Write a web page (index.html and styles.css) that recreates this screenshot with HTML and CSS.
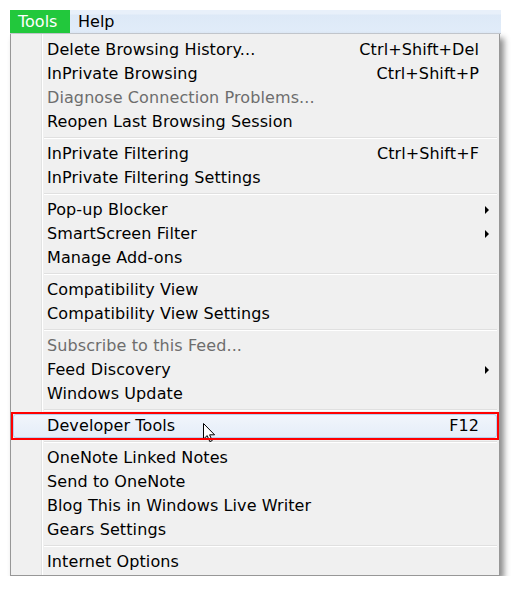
FILE: index.html
```html
<!DOCTYPE html>
<html lang="en">
<head>
    <meta charset="UTF-8">
    <title>Tools menu</title>
    <link rel="stylesheet" href="styles.css">
</head>
<body>
    <div class="window">
        <!-- Barra de menú -->
        <div class="menubar">
            <span class="menubar-item active">Tools</span>
            <span class="menubar-item">Help</span>
        </div>

        <!-- Menú desplegable -->
        <div class="dropdown">
            <div class="item"><span>Delete Browsing History...</span><span class="key">Ctrl+Shift+Del</span></div>
            <div class="item"><span>InPrivate Browsing</span><span class="key">Ctrl+Shift+P</span></div>
            <div class="item disabled"><span>Diagnose Connection Problems...</span></div>
            <div class="item"><span>Reopen Last Browsing Session</span></div>
            <div class="sep"></div>
            <div class="item"><span>InPrivate Filtering</span><span class="key">Ctrl+Shift+F</span></div>
            <div class="item"><span>InPrivate Filtering Settings</span></div>
            <div class="sep"></div>
            <div class="item sub"><span>Pop-up Blocker</span></div>
            <div class="item sub"><span>SmartScreen Filter</span></div>
            <div class="item"><span>Manage Add-ons</span></div>
            <div class="sep"></div>
            <div class="item"><span>Compatibility View</span></div>
            <div class="item"><span>Compatibility View Settings</span></div>
            <div class="sep"></div>
            <div class="item disabled"><span>Subscribe to this Feed...</span></div>
            <div class="item sub"><span>Feed Discovery</span></div>
            <div class="item"><span>Windows Update</span></div>
            <div class="sep"></div>
            <div class="item hover"><span>Developer Tools</span><span class="key">F12</span>
                <svg class="cursor" width="13" height="20" viewBox="0 0 13 20">
                    <path d="M0.5 0.5 L0.5 16 L4.2 12.6 L6.8 18.6 L9.2 17.6 L6.6 11.8 L11.6 11.8 Z" fill="#fff" stroke="#000" stroke-width="1" stroke-linejoin="miter"/>
                </svg>
            </div>
            <div class="sep"></div>
            <div class="item"><span>OneNote Linked Notes</span></div>
            <div class="item"><span>Send to OneNote</span></div>
            <div class="item"><span>Blog This in Windows Live Writer</span></div>
            <div class="item"><span>Gears Settings</span></div>
            <div class="sep"></div>
            <div class="item"><span>Internet Options</span></div>
        </div>
    </div>
</body>
</html>
```

FILE: styles.css
```css
* {
    margin: 0;
    padding: 0;
    box-sizing: border-box;
}

body {
    background: #fff;
    font-family: "DejaVu Sans", Verdana, sans-serif;
    font-size: 16px;
    color: #000;
}

.window {
    margin: 10px 0 0 10px;
    width: 491px;
}

.menubar {
    height: 24px;
    display: flex;
    background: linear-gradient(#e8f0fa 0, #e8f0fa 4px, #dde9f7 5px, #e1ecf9 100%);
    border-bottom: 1px solid #c8ccd2;
}

.menubar-item {
    padding: 1px 8px 0;
    line-height: 22px;
}

.menubar-item.active {
    background: #22c83c;
    color: #fff;
    width: 60px;
}

.dropdown {
    width: 490px;
    background: #f0f0f0;
    border: 1px solid #979797;
    border-top: none;
    padding: 4px 2px 1px;
    box-shadow: 4px 4px 6px rgba(0, 0, 0, 0.45);
    background-image: linear-gradient(to right, transparent 30px, #e2e3e3 30px, #e2e3e3 31px, #fff 31px, #fff 32px, transparent 32px);
}

.item {
    height: 24px;
    line-height: 24px;
    display: flex;
    justify-content: space-between;
    padding: 0 18px 0 34px;
    position: relative;
    letter-spacing: 0.1px;
}

.item.disabled {
    color: #6d6d6d;
}

.item.sub::after {
    content: "";
    position: absolute;
    right: 8px;
    top: 8px;
    border-left: 4px solid #000;
    border-top: 4px solid transparent;
    border-bottom: 4px solid transparent;
}

.item.hover {
    background: linear-gradient(#f1f5fb, #e5edf8);
    border: 1px solid #b6d0ee;
    border-radius: 3px;
    padding: 0 17px 0 33px;
    line-height: 22px;
}

.item.hover::after {
    content: "";
    position: absolute;
    top: -3px;
    bottom: -3px;
    left: -3px;
    right: -3px;
    border: 2px solid #f00;
}

.cursor {
    position: absolute;
    left: 189px;
    top: 8px;
}

.sep {
    height: 8px;
    margin-left: 31px;
    padding-top: 3px;
}

.sep::before {
    content: "";
    display: block;
    border-top: 1px solid #e0e0e0;
    border-bottom: 1px solid #fff;
}
```
